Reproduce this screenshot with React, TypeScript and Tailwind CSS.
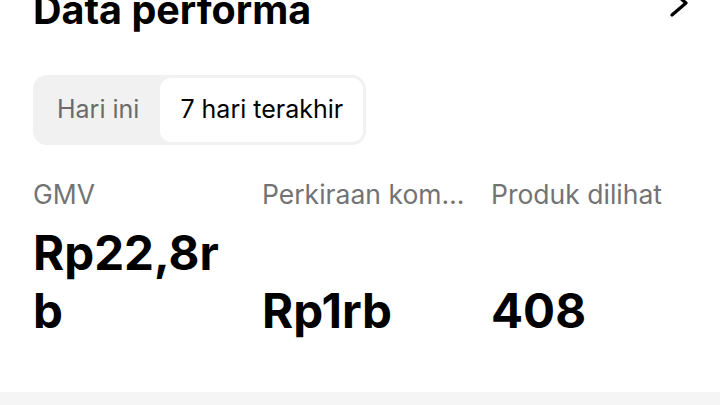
import React from "react";

export default function App() {
  const stats = [
    { label: "GMV", value: "Rp22,8rb" },
    { label: "Perkiraan komisi", value: "Rp1rb" },
    { label: "Produk dilihat", value: "408" },
  ];

  return (
    <div className="w-[720px] h-[405px] overflow-hidden bg-white flex flex-col font-['Inter',sans-serif] text-black">
      {/* header */}
      <div className="flex items-start justify-between pl-[33px] pr-[30px]">
        <h1 className="-mt-[9px] text-[39.5px] leading-none font-bold">Data performa</h1>
        <svg width="22" height="30" viewBox="0 0 22 30" className="-mt-[12px]" fill="none">
          <path d="M4 3 L18 15 L4 27" stroke="#000" strokeWidth="3.2" strokeLinecap="round" strokeLinejoin="round" />
        </svg>
      </div>

      {/* period switch */}
      <div className="pl-[33px] mt-[44.5px]">
        <div className="inline-flex items-center h-[70px] p-[3px] rounded-[14px] bg-[#f1f1f1]">
          <button className="h-full px-[21px] text-[25px] text-[#6b6b6b]">Hari ini</button>
          <button className="h-full px-[20px] rounded-[11px] bg-white text-[25px] text-black">7 hari terakhir</button>
        </div>
      </div>

      {/* stats */}
      <div className="pl-[33px] mt-[33px] grid grid-cols-3 items-end">
        {stats.map((s) => (
          <div key={s.label} className="pr-[25px] text-[26.5px] leading-[32px] text-[#737373] truncate">
            {s.label}
          </div>
        ))}
        {stats.map((s) => (
          <div key={s.value} className="pr-[25px] mt-[14px] text-[47.5px] leading-[58px] font-bold break-all">
            {s.value}
          </div>
        ))}
      </div>
      <div className="mt-auto h-[13px] bg-[#f5f5f5]" />
    </div>
  );
}
